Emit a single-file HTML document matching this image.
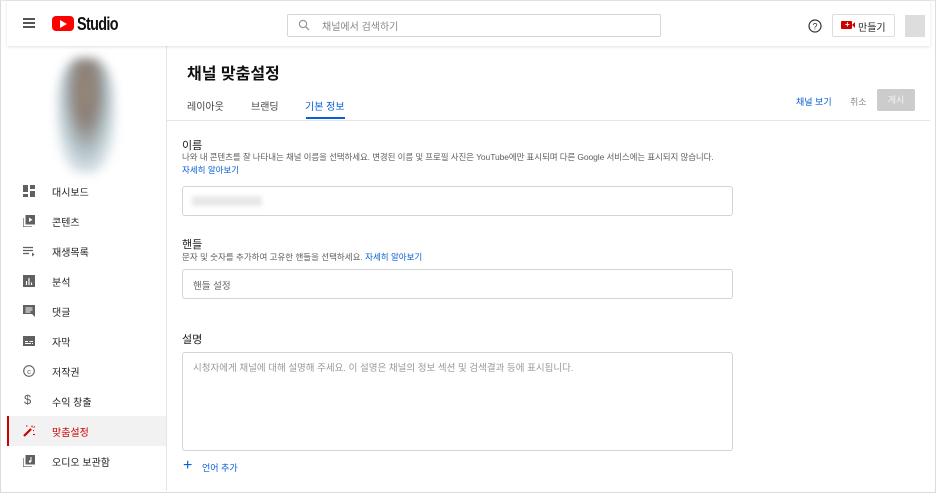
<!DOCTYPE html>
<html><head><meta charset="utf-8"><style>
*{box-sizing:border-box;margin:0;padding:0}
body{width:936px;height:493px;overflow:hidden;background:#fff;font-family:"Liberation Sans","Noto Sans CJK KR",sans-serif;color:#0d0d0d;position:relative}
.frame{position:absolute;left:0;top:0;width:936px;height:493px;border:1px solid #dcdcdc;border-top:1px solid #e6e6e6}
.hdr{position:absolute;left:7px;top:1px;width:923px;height:45px;background:#fff;box-shadow:0 1px 3px rgba(0,0,0,.12);z-index:2}
.abs{position:absolute}
.side{position:absolute;left:7px;top:46px;width:160px;height:445px;border-right:1px solid #e5e5e5}
.nav{position:absolute;left:7px;width:159px;height:30px;font-size:10px;color:#222}
.nav .ic{position:absolute;left:16px;top:9px;width:12px;height:12px}
.nav .t{position:absolute;left:45px;top:8px}
.lbl{font-size:11px;color:#222}
.sub{font-size:8.5px;color:#606060}
.link{color:#065fd4}
.box{position:absolute;border:1px solid #d4d4d4;border-radius:3px}
</style></head><body>
<div class="frame"></div>
<div class="hdr">
  <div class="abs" style="left:16px;top:17px;width:12px;height:2px;background:#555;box-shadow:0 4px 0 #555,0 8px 0 #555"></div>
  <div class="abs" style="left:45px;top:15px;width:22px;height:15px;background:#f00;border-radius:4px"></div>
  <div class="abs" style="left:53px;top:19px;width:0;height:0;border-left:7px solid #fff;border-top:4px solid transparent;border-bottom:4px solid transparent"></div>
  <div class="abs" style="left:70px;top:13px;font-size:18px;font-weight:bold;letter-spacing:-0.8px;color:#111;transform:scaleX(.8);transform-origin:left">Studio</div>
  <div class="abs" style="left:280px;top:13px;width:374px;height:23px;border:1px solid #d6d6d6;border-radius:2px"></div>
  <svg class="abs" style="left:291px;top:18px" width="12" height="12" viewBox="0 0 12 12"><circle cx="5" cy="5" r="3.6" fill="none" stroke="#999" stroke-width="1.2"/><path d="M7.7 7.7L11 11" stroke="#999" stroke-width="1.3"/></svg>
  <div class="abs" style="left:315px;top:17px;font-size:10px;color:#888">채널에서 검색하기</div>
  <svg class="abs" style="left:801px;top:18px" width="14" height="14" viewBox="0 0 14 14"><circle cx="7" cy="7" r="6" fill="none" stroke="#333" stroke-width="1.2"/><text x="7" y="10.5" font-size="9" text-anchor="middle" fill="#333" font-family="Liberation Sans">?</text></svg>
  <div class="abs" style="left:825px;top:13px;width:63px;height:23px;border:1px solid #ddd;border-radius:2px"></div>
  <div class="abs" style="left:834px;top:20px;width:11px;height:8px;background:#cc0000;border-radius:1px"></div>
  <div class="abs" style="left:845px;top:21px;width:0;height:0;border-right:3px solid #cc0000;border-top:3px solid transparent;border-bottom:3px solid transparent"></div>
  <div class="abs" style="left:838px;top:21px;color:#fff;font-size:8px;line-height:6px;font-weight:bold">+</div>
  <div class="abs" style="left:851px;top:18px;font-size:10px;color:#222">만들기</div>
  <div class="abs" style="left:898px;top:14px;width:20px;height:22px;background:#ddd"></div>
</div>
<div class="side"></div>
<div class="abs" style="left:57px;top:58px;width:58px;height:115px;border-radius:40%;background:radial-gradient(ellipse at 50% 30%,#9a8878 0%,#8a8078 25%,#b8c9d0 55%,#eef2f3 80%,#fff 100%);filter:blur(5px)"></div>
<div class="abs" style="left:167px;top:46px;width:763px;height:75px;border-bottom:1px solid #e5e5e5"></div>
<div class="abs" style="left:187px;top:60px;font-size:16px;font-weight:bold;color:#111">채널 맞춤설정</div>
<div class="abs" style="left:187px;top:98px;font-size:10px;color:#444">레이아웃</div>
<div class="abs" style="left:251px;top:98px;font-size:10px;color:#444">브랜딩</div>
<div class="abs" style="left:305px;top:98px;font-size:10px;color:#065fd4">기본 정보</div>
<div class="abs" style="left:306px;top:117px;width:39px;height:2px;background:#065fd4"></div>
<div class="abs" style="left:796px;top:95px;font-size:9px;color:#065fd4">채널 보기</div>
<div class="abs" style="left:850px;top:95px;font-size:9px;color:#888">취소</div>
<div class="abs" style="left:877px;top:89px;width:38px;height:22px;background:#ccc;border-radius:2px;color:#f4f4f4;font-size:9px;text-align:center;line-height:22px">게시</div>

<div class="abs lbl" style="left:182px;top:137px">이름</div>
<div class="abs sub" style="left:182px;top:151px;white-space:nowrap;letter-spacing:-0.1px">나와 내 콘텐츠를 잘 나타내는 채널 이름을 선택하세요. 변경된 이름 및 프로필 사진은 YouTube에만 표시되며 다른 Google 서비스에는 표시되지 않습니다.</div>
<div class="abs sub link" style="left:182px;top:164px">자세히 알아보기</div>
<div class="box" style="left:182px;top:186px;width:551px;height:30px"></div>
<div class="abs" style="left:192px;top:196px;width:70px;height:10px;background:#e8e8e8;filter:blur(2px)"></div>

<div class="abs lbl" style="left:182px;top:236px">핸들</div>
<div class="abs sub" style="left:182px;top:251px">문자 및 숫자를 추가하여 고유한 핸들을 선택하세요. <span class="link">자세히 알아보기</span></div>
<div class="box" style="left:182px;top:269px;width:551px;height:30px"></div>
<div class="abs" style="left:193px;top:278px;font-size:9.5px;color:#666">핸들 설정</div>

<div class="abs lbl" style="left:182px;top:331px">설명</div>
<div class="box" style="left:182px;top:352px;width:551px;height:99px"></div>
<div class="abs" style="left:193px;top:360px;font-size:9.5px;color:#999">시청자에게 채널에 대해 설명해 주세요. 이 설명은 채널의 정보 섹션 및 검색결과 등에 표시됩니다.</div>
<div class="abs" style="left:183px;top:458px;font-size:16px;color:#065fd4;line-height:15px">+</div>
<div class="abs" style="left:202px;top:461px;font-size:9px;color:#065fd4">언어 추가</div>

<div class="nav" style="top:176px"><svg class="ic" viewBox="0 0 12 12"><rect x="0" y="0" width="5" height="7" fill="#606060"/><rect x="7" y="0" width="5" height="4" fill="#606060"/><rect x="0" y="9" width="5" height="3" fill="#606060"/><rect x="7" y="6" width="5" height="6" fill="#606060"/></svg><span class="t">대시보드</span></div>
<div class="nav" style="top:206px"><svg class="ic" viewBox="0 0 12 12"><path d="M0 3v9h9" fill="none" stroke="#606060" stroke-width="1.3"/><rect x="2.5" y="0" width="9.5" height="9.5" fill="#606060"/><path d="M6 2.5v4.5l3.5-2.2z" fill="#fff"/></svg><span class="t">콘텐츠</span></div>
<div class="nav" style="top:236px"><svg class="ic" viewBox="0 0 12 12"><path d="M0 2.5h10M0 5.5h10M0 8.5h6" stroke="#606060" stroke-width="1.2"/><path d="M9 7.5v4l2.5-2z" fill="#606060"/></svg><span class="t">재생목록</span></div>
<div class="nav" style="top:266px"><svg class="ic" viewBox="0 0 12 12"><rect x="0" y="0" width="12" height="12" fill="#606060"/><path d="M3.5 6v4M6 3v7M8.5 7.5v2.5" stroke="#fff" stroke-width="1.2"/></svg><span class="t">분석</span></div>
<div class="nav" style="top:296px"><svg class="ic" viewBox="0 0 12 12"><path d="M0 0h12v12l-3-3H0z" fill="#606060"/><path d="M2.5 3h7M2.5 5h7M2.5 7h5" stroke="#fff" stroke-width="1"/></svg><span class="t">댓글</span></div>
<div class="nav" style="top:326px"><svg class="ic" viewBox="0 0 12 12"><rect x="0" y="1" width="12" height="10" fill="#606060"/><path d="M2 6.5h3M6.5 6.5h3.5M2 8.5h6M9 8.5h1" stroke="#fff" stroke-width="1"/></svg><span class="t">자막</span></div>
<div class="nav" style="top:356px"><svg class="ic" viewBox="0 0 12 12"><circle cx="6" cy="6" r="5.3" fill="none" stroke="#606060" stroke-width="1.1"/><text x="6" y="8.8" font-size="7.5" text-anchor="middle" fill="#606060" font-family="Liberation Sans">c</text></svg><span class="t">저작권</span></div>
<div class="nav" style="top:386px"><span class="abs" style="left:17px;top:6px;font-size:13px;color:#606060">$</span><span class="t">수익 창출</span></div>
<div class="nav" style="top:416px;background:#f2f2f2"><div class="abs" style="left:0;top:0;width:2px;height:30px;background:#cc0000"></div><svg class="ic" viewBox="0 0 12 12"><path d="M1 11L8 4" stroke="#cc0000" stroke-width="2.2"/><path d="M9 0.5v2M10.5 2h1.5M10 9.5h2M3 1h1.5M10 5.5h1" stroke="#cc0000" stroke-width="1"/></svg><span class="t" style="color:#cc0000">맞춤설정</span></div>
<div class="nav" style="top:446px"><svg class="ic" viewBox="0 0 12 12"><path d="M0 3v9h9" fill="none" stroke="#606060" stroke-width="1.3"/><rect x="2.5" y="0" width="9.5" height="9.5" fill="#606060"/><path d="M8 2v4.5" stroke="#fff" stroke-width="1"/><circle cx="7" cy="6.5" r="1.2" fill="#fff"/></svg><span class="t">오디오 보관함</span></div>
</body></html>
